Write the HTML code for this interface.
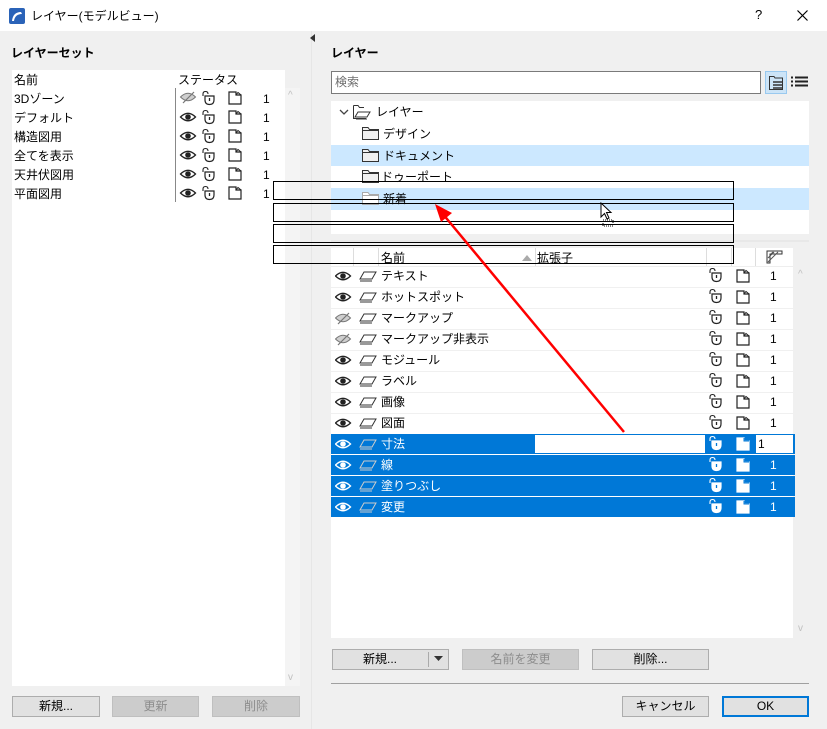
<!DOCTYPE html>
<html><head><meta charset="utf-8">
<style>
*{box-sizing:border-box;margin:0;padding:0}
body{width:827px;height:729px;background:#f0f0f0;font-family:"Liberation Sans","Noto Sans CJK JP",sans-serif;font-size:12px;color:#000;position:relative;overflow:hidden}
.a{position:absolute}
.t{position:absolute;white-space:nowrap;line-height:14px}
.btn{position:absolute;height:21px;border:1px solid #adadad;background:#e1e1e1;text-align:center;line-height:19px;font-size:12px}
.dis{background:#cccccc;border-color:#bfbfbf;color:#8d8d8d}
.sel{position:absolute;left:331px;width:464px;height:20px;background:#0078d7}
.drag{position:absolute;left:273px;width:461px;border:1.5px solid #000}
</style></head><body>
<div class="a" style="left:0;top:0;width:827px;height:31px;background:#fff"></div>
<svg class="a" style="left:9px;top:8px" width="16" height="16"><rect width="16" height="16" rx="2" fill="#2a63b8"/><path d="M3 13 Q4 4 12 4 L13 6 Q6 6 5 13Z" fill="#fff"/></svg>
<div class="t" style="left:31px;top:9px;font-size:12px">レイヤー(モデルビュー)</div>
<div class="t" style="left:755px;top:8px;font-size:13px">?</div>
<svg class="a" style="left:797px;top:10px" width="11" height="11"><path d="M0.5 0.5L10.5 10.5M10.5 0.5L0.5 10.5" stroke="#000" stroke-width="1.2"/></svg>

<div class="a" style="left:311px;top:31px;width:1px;height:698px;background:#e6e6e6"></div>
<svg class="a" style="left:310px;top:34px" width="6" height="8"><path d="M5 0L0 4L5 8Z" fill="#333"/></svg>

<div class="t" style="left:11px;top:46px;font-weight:bold">レイヤーセット</div>
<div class="a" style="left:12px;top:70px;width:273px;height:616px;background:#fff"></div>
<div class="a" style="left:285px;top:88px;width:15px;height:598px;background:#f4f4f4"></div>
<div class="a" style="left:175px;top:88px;width:1px;height:114px;background:#888"></div>
<div class="t" style="left:14px;top:73px">名前</div>
<div class="t" style="left:178px;top:73px">ステータス</div>
<div class="t" style="left:288px;top:89px;color:#c0c0c0;font-size:10px">^</div>
<div class="t" style="left:288px;top:671px;color:#c0c0c0;font-size:10px">v</div>

<svg width="0" height="0" style="position:absolute">
<defs>
<g id="eye"><path d="M0.5 5Q8 -2.5 15.5 5Q8 12.5 0.5 5Z" fill="none" stroke="#222" stroke-width="1.3"/><circle cx="8" cy="5" r="2.8" fill="#222"/></g>
<g id="eyew"><path d="M0.5 5Q8 -2.5 15.5 5Q8 12.5 0.5 5Z" fill="none" stroke="#fff" stroke-width="1.4"/><circle cx="8" cy="5" r="2.8" fill="#fff"/></g>
<g id="eyeh"><path d="M0.5 5Q8 -2.5 15.5 5Q8 12.5 0.5 5Z" fill="#cfcfcf" stroke="#777" stroke-width="1"/><path d="M3 11L14 0" stroke="#777" stroke-width="1.2"/></g>
<g id="lock"><path d="M2 5V3Q2 0.5 4.5 0.5Q7 0.5 7 3" fill="none" stroke="#222" stroke-width="1.1"/><path d="M4 5H13V9Q13 13.5 8.5 13.5Q4 13.5 4 9Z" fill="none" stroke="#222" stroke-width="1.2"/><path d="M8.5 7V10" stroke="#222" stroke-width="1.3"/></g>
<g id="lockw"><path d="M2 5V3Q2 0.5 4.5 0.5Q7 0.5 7 3" fill="none" stroke="#fff" stroke-width="1.1"/><path d="M4 5H13V9Q13 13.5 8.5 13.5Q4 13.5 4 9Z" fill="#fff" stroke="#fff" stroke-width="1.2"/><path d="M8.5 7V10" stroke="#0078d7" stroke-width="1.3"/></g>
<g id="file"><path d="M1 1H8V4H13V13H1Z" fill="none" stroke="#222" stroke-width="1.2"/><path d="M8 4L10 1.5L13 4" fill="none" stroke="#222" stroke-width="1"/></g>
<g id="filew"><path d="M1 1H8V4H13V13H1Z" fill="#fff" stroke="#fff" stroke-width="1.2"/><path d="M8 1V4H13" fill="none" stroke="#0078d7" stroke-width="1"/></g>
<g id="lay"><path d="M4 1H16L12 8H0Z" fill="none" stroke="#333" stroke-width="1"/><path d="M0 10H12" stroke="#333"/></g>
<g id="layw"><path d="M4 1H16L12 8H0Z" fill="none" stroke="#ccc" stroke-width="1"/><path d="M0 10H12" stroke="#ccc"/></g>
<g id="fold"><path d="M0.5 2.5H6L7.5 4.5H16.5V14.5H0.5Z" fill="#f0f0f0" stroke="#333"/><path d="M0.5 5.5H16.5" stroke="#333"/></g>
</defs></svg>

<div class="t" style="left:14px;top:92px">3Dゾーン</div>
<div class="t" style="left:14px;top:111px">デフォルト</div>
<div class="t" style="left:14px;top:130px">構造図用</div>
<div class="t" style="left:14px;top:149px">全てを表示</div>
<div class="t" style="left:14px;top:168px">天井伏図用</div>
<div class="t" style="left:14px;top:187px">平面図用</div>
<svg class="a" style="left:179px;top:91px" width="95" height="115">
<use href="#eyeh" x="1" y="1"/><use href="#lock" x="22" y="0"/><use href="#file" x="49" y="0"/>
<use href="#eye" x="1" y="21"/><use href="#lock" x="22" y="19"/><use href="#file" x="49" y="19"/>
<use href="#eye" x="1" y="40"/><use href="#lock" x="22" y="38"/><use href="#file" x="49" y="38"/>
<use href="#eye" x="1" y="59"/><use href="#lock" x="22" y="57"/><use href="#file" x="49" y="57"/>
<use href="#eye" x="1" y="78"/><use href="#lock" x="22" y="76"/><use href="#file" x="49" y="76"/>
<use href="#eye" x="1" y="97"/><use href="#lock" x="22" y="95"/><use href="#file" x="49" y="95"/>
</svg>
<div class="t" style="left:263px;top:92px">1</div>
<div class="t" style="left:263px;top:111px">1</div>
<div class="t" style="left:263px;top:130px">1</div>
<div class="t" style="left:263px;top:149px">1</div>
<div class="t" style="left:263px;top:168px">1</div>
<div class="t" style="left:263px;top:187px">1</div>

<div class="btn" style="left:12px;top:696px;width:88px">新規...</div>
<div class="btn dis" style="left:112px;top:696px;width:87px">更新</div>
<div class="btn dis" style="left:212px;top:696px;width:88px">削除</div>

<div class="t" style="left:331px;top:46px;font-weight:bold">レイヤー</div>
<div class="a" style="left:331px;top:71px;width:430px;height:23px;background:#fff;border:1px solid #7a7a7a"></div>
<div class="t" style="left:335px;top:75px;color:#6d6d6d">検索</div>
<div class="a" style="left:765px;top:71px;width:22px;height:23px;background:#cce4f7;border:1px solid #99c9ef"></div>
<svg class="a" style="left:768px;top:74px" width="17" height="17"><path d="M1.5 2.5H6L7 4H14.5V15.5H1.5Z" fill="none" stroke="#333"/><path d="M5 8H15M5 11H15M5 14H15" stroke="#333" stroke-width="1.5"/></svg>
<svg class="a" style="left:791px;top:76px" width="17" height="12"><path d="M0 1.5H2M4 1.5H17M0 5.5H2M4 5.5H17M0 9.5H2M4 9.5H17" stroke="#222" stroke-width="2"/></svg>

<div class="a" style="left:331px;top:101px;width:478px;height:133px;background:#fff"></div>
<div class="a" style="left:331px;top:145px;width:478px;height:21px;background:#cce8ff"></div>
<div class="a" style="left:331px;top:188px;width:478px;height:22px;background:#cce8ff"></div>
<svg class="a" style="left:339px;top:108px" width="10" height="8"><path d="M1 2L5 6L9 2" fill="none" stroke="#444" stroke-width="1.3"/></svg>
<svg class="a" style="left:352px;top:103px" width="20" height="18"><path d="M1.5 2.5H6L7.5 4.5H12" fill="none" stroke="#333"/><path d="M1.5 2.5V15.5H14" fill="none" stroke="#333"/><path d="M6 9H18L15 14H3Z" fill="#fff" stroke="#333"/><path d="M4 16H15" stroke="#333"/></svg>
<div class="t" style="left:376px;top:105px">レイヤー</div>
<svg class="a" style="left:362px;top:125px" width="18" height="16"><use href="#fold"/></svg>
<div class="t" style="left:383px;top:127px">デザイン</div>
<svg class="a" style="left:362px;top:147px" width="18" height="16"><use href="#fold"/></svg>
<div class="t" style="left:383px;top:149px">ドキュメント</div>
<svg class="a" style="left:362px;top:168px" width="18" height="16"><use href="#fold"/></svg>
<div class="t" style="left:381px;top:170px">ドゥーポート</div>
<svg class="a" style="left:362px;top:190px" width="18" height="16"><path d="M0.5 2.5H6L7.5 4.5H16.5V14.5H0.5Z" fill="#fff" stroke="#aaa"/><path d="M0.5 5.5H16.5" stroke="#aaa"/></svg>
<div class="t" style="left:383px;top:192px">新着</div>

<div class="a" style="left:331px;top:240px;width:478px;height:2px;background:#e8e8e8"></div>
<div class="a" style="left:331px;top:248px;width:462px;height:390px;background:#fff"></div>
<div class="a" style="left:353px;top:248px;width:1px;height:18px;background:#ddd"></div>
<div class="a" style="left:378px;top:248px;width:1px;height:18px;background:#ddd"></div>
<div class="a" style="left:535px;top:248px;width:1px;height:18px;background:#ddd"></div>
<div class="a" style="left:706px;top:248px;width:1px;height:18px;background:#ddd"></div>
<div class="a" style="left:731px;top:248px;width:1px;height:18px;background:#ddd"></div>
<div class="a" style="left:755px;top:248px;width:1px;height:18px;background:#ddd"></div>
<div class="a" style="left:331px;top:266px;width:462px;height:1px;background:#eee"></div>
<div class="t" style="left:381px;top:251px">名前</div>
<svg class="a" style="left:522px;top:255px" width="10" height="6"><path d="M0 6L5 0L10 6Z" fill="#aaa"/></svg>
<div class="t" style="left:537px;top:251px">拡張子</div>
<svg class="a" style="left:765px;top:250px" width="18" height="14"><path d="M2 1H17V4H5V13H2Z" fill="#fff" stroke="#333"/><path d="M3 12L13 2M3 8L9 2M6 4L8 2" stroke="#555"/></svg>
<div class="t" style="left:798px;top:268px;color:#c0c0c0;font-size:10px">^</div>
<div class="t" style="left:798px;top:622px;color:#c0c0c0;font-size:10px">v</div>

<div class="a" style="left:331px;top:287px;width:462px;height:1px;background:#f0f0f0"></div>
<div class="a" style="left:331px;top:308px;width:462px;height:1px;background:#f0f0f0"></div>
<div class="a" style="left:331px;top:329px;width:462px;height:1px;background:#f0f0f0"></div>
<div class="a" style="left:331px;top:350px;width:462px;height:1px;background:#f0f0f0"></div>
<div class="a" style="left:331px;top:371px;width:462px;height:1px;background:#f0f0f0"></div>
<div class="a" style="left:331px;top:392px;width:462px;height:1px;background:#f0f0f0"></div>
<div class="a" style="left:331px;top:413px;width:462px;height:1px;background:#f0f0f0"></div>

<div class="sel" style="top:434px"></div>
<div class="sel" style="top:455px"></div>
<div class="sel" style="top:476px"></div>
<div class="sel" style="top:497px"></div>
<div class="a" style="left:535px;top:435px;width:170px;height:18px;background:#fff"></div>
<div class="a" style="left:756px;top:435px;width:37px;height:18px;background:#fff"></div>

<svg class="a" style="left:335px;top:268px" width="400" height="250">
<use href="#eye" x="0" y="3"/><use href="#lay" x="25" y="3"/>
<use href="#eye" x="0" y="24"/><use href="#lay" x="25" y="24"/>
<use href="#eyeh" x="0" y="45"/><use href="#lay" x="25" y="45"/>
<use href="#eyeh" x="0" y="66"/><use href="#lay" x="25" y="66"/>
<use href="#eye" x="0" y="87"/><use href="#lay" x="25" y="87"/>
<use href="#eye" x="0" y="108"/><use href="#lay" x="25" y="108"/>
<use href="#eye" x="0" y="129"/><use href="#lay" x="25" y="129"/>
<use href="#eye" x="0" y="150"/><use href="#lay" x="25" y="150"/>
<use href="#eyew" x="0" y="171"/><use href="#layw" x="25" y="171"/>
<use href="#eyew" x="0" y="192"/><use href="#layw" x="25" y="192"/>
<use href="#eyew" x="0" y="213"/><use href="#layw" x="25" y="213"/>
<use href="#eyew" x="0" y="234"/><use href="#layw" x="25" y="234"/>
</svg>
<svg class="a" style="left:708px;top:268px" width="50" height="250">
<use href="#lock" x="0" y="0"/><use href="#file" x="28" y="1"/>
<use href="#lock" x="0" y="21"/><use href="#file" x="28" y="22"/>
<use href="#lock" x="0" y="42"/><use href="#file" x="28" y="43"/>
<use href="#lock" x="0" y="63"/><use href="#file" x="28" y="64"/>
<use href="#lock" x="0" y="84"/><use href="#file" x="28" y="85"/>
<use href="#lock" x="0" y="105"/><use href="#file" x="28" y="106"/>
<use href="#lock" x="0" y="126"/><use href="#file" x="28" y="127"/>
<use href="#lock" x="0" y="147"/><use href="#file" x="28" y="148"/>
<use href="#lockw" x="0" y="168"/><use href="#filew" x="28" y="169"/>
<use href="#lockw" x="0" y="189"/><use href="#filew" x="28" y="190"/>
<use href="#lockw" x="0" y="210"/><use href="#filew" x="28" y="211"/>
<use href="#lockw" x="0" y="231"/><use href="#filew" x="28" y="232"/>
</svg>
<div class="t" style="left:381px;top:269px">テキスト</div>
<div class="t" style="left:381px;top:290px">ホットスポット</div>
<div class="t" style="left:381px;top:311px">マークアップ</div>
<div class="t" style="left:381px;top:332px">マークアップ非表示</div>
<div class="t" style="left:381px;top:353px">モジュール</div>
<div class="t" style="left:381px;top:374px">ラベル</div>
<div class="t" style="left:381px;top:395px">画像</div>
<div class="t" style="left:381px;top:416px">図面</div>
<div class="t" style="left:381px;top:437px;color:#fff">寸法</div>
<div class="t" style="left:381px;top:458px;color:#fff">線</div>
<div class="t" style="left:381px;top:479px;color:#fff">塗りつぶし</div>
<div class="t" style="left:381px;top:500px;color:#fff">変更</div>
<div class="t" style="left:770px;top:269px">1</div>
<div class="t" style="left:770px;top:290px">1</div>
<div class="t" style="left:770px;top:311px">1</div>
<div class="t" style="left:770px;top:332px">1</div>
<div class="t" style="left:770px;top:353px">1</div>
<div class="t" style="left:770px;top:374px">1</div>
<div class="t" style="left:770px;top:395px">1</div>
<div class="t" style="left:770px;top:416px">1</div>
<div class="t" style="left:758px;top:437px">1</div>
<div class="t" style="left:770px;top:458px;color:#fff">1</div>
<div class="t" style="left:770px;top:479px;color:#fff">1</div>
<div class="t" style="left:770px;top:500px;color:#fff">1</div>

<div class="drag" style="top:181px;height:19px"></div>
<div class="drag" style="top:203px;height:19px"></div>
<div class="drag" style="top:224px;height:19px"></div>
<div class="drag" style="top:245px;height:19px"></div>

<svg class="a" style="left:600px;top:202px" width="18" height="26"><path d="M1 1V15L4.5 11.5L7 17L9 16L6.5 10.5H11Z" fill="#fff" stroke="#000"/><rect x="3" y="18" width="10" height="6" fill="none" stroke="#000" stroke-dasharray="1 1"/></svg>

<svg class="a" style="left:0;top:0" width="827" height="729"><path d="M624 432L442 213" stroke="#f00" stroke-width="2.5"/><path d="M435 204L452 213L441 222Z" fill="#f00"/></svg>

<div class="btn" style="left:332px;top:649px;width:117px;text-align:left;padding-left:30px">新規...</div>
<div class="a" style="left:428px;top:652px;width:1px;height:15px;background:#aaa"></div>
<svg class="a" style="left:434px;top:656px" width="9" height="6"><path d="M0 0H9L4.5 5Z" fill="#333"/></svg>
<div class="btn dis" style="left:462px;top:649px;width:117px">名前を変更</div>
<div class="btn" style="left:592px;top:649px;width:117px">削除...</div>
<div class="a" style="left:331px;top:683px;width:478px;height:1px;background:#a0a0a0"></div>
<div class="btn" style="left:622px;top:696px;width:87px">キャンセル</div>
<div class="btn" style="left:722px;top:696px;width:87px;border:2px solid #0078d7;line-height:17px">OK</div>
</body></html>
